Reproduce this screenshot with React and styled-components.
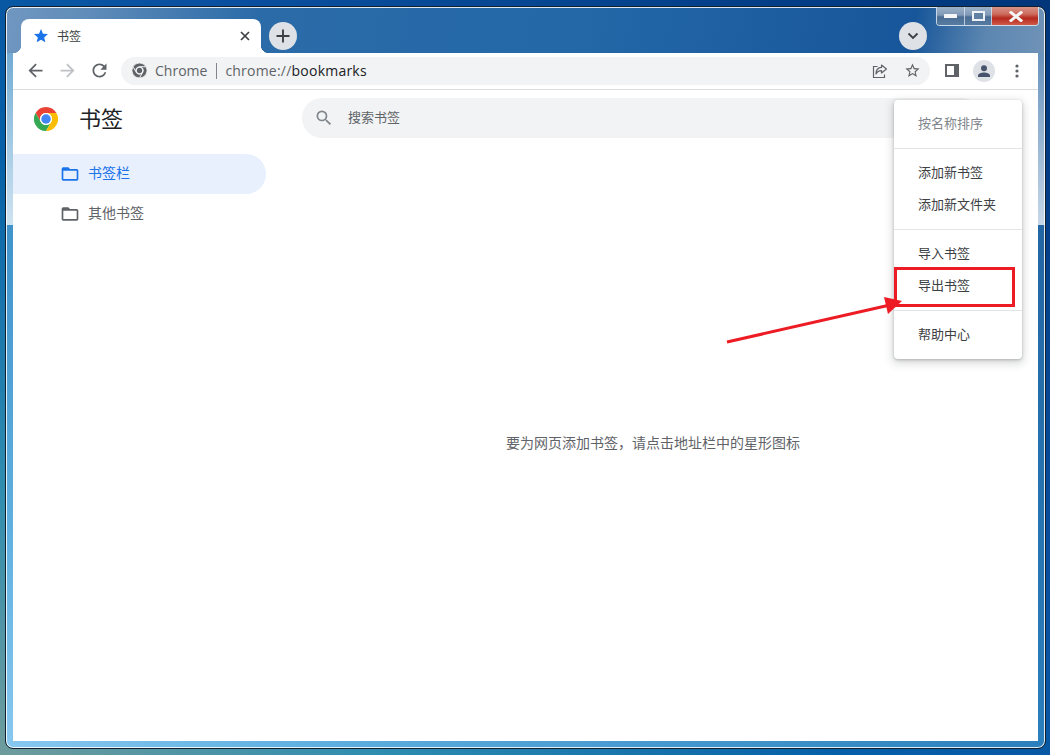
import React from "react";
import styled, { createGlobalStyle } from "styled-components";

const Global = createGlobalStyle`
  html, body { margin: 0; padding: 0; height: 100%; overflow: hidden; }
  #root { height: 100%; }
  * { box-sizing: border-box; }
  body { font-family: "Open Sans", "Noto Sans CJK SC", sans-serif; }
`;

const Desktop = styled.div`
  height: 755px;
  padding: 6px 4px 6px 5px;
  background: linear-gradient(to top right, #6f9c9c 0%, #2f8db0 18%, #0660a8 40%, #0a50a0 60%, #00357a 100%);
`;

const Frame = styled.div`
  position: relative;
  height: 100%;
  display: flex;
  flex-direction: column;
  padding: 12px 7px 7px;
  border: 1px solid #10202e;
  border-radius: 8px;
  box-shadow: inset 0 0 0 1px rgba(255, 255, 255, 0.85);
  background:
    linear-gradient(to bottom, rgba(255, 255, 255, 0.32), rgba(255, 255, 255, 0.74)) 0 46px / 100% 172px no-repeat,
    linear-gradient(100deg, #7097c0 0%, #5f8cb9 8%, #2b6ba8 24%, #2468a8 55%, #17569a 87%, #5c86b0 94%, #7093b8 100%) 0 0 / 100% 46px no-repeat,
    linear-gradient(to top right, #88c8f0 0%, #5fb0e0 15%, #2a7fbc 50%, #1f5b9a 100%);
`;

const WindowControls = styled.div`
  position: absolute;
  top: 0;
  right: 6px;
  width: 103px;
  height: 19px;
  display: flex;
  border: 1px solid rgba(225, 235, 245, 0.85);
  border-top: none;
  border-radius: 0 0 4px 4px;
  overflow: hidden;
`;

const ControlButton = styled.div`
  flex: ${(p) => (p.$close ? "0 0 47px" : p.$wide ? "0 0 27px" : "0 0 28px")};
  display: flex;
  align-items: center;
  justify-content: center;
  border-right: ${(p) => (p.$close ? "none" : "1px solid rgba(225, 235, 245, 0.7)")};
  background: ${(p) =>
    p.$close
      ? "linear-gradient(to bottom, #d89488 0%, #cc6a5c 40%, #b5281c 62%, #d05a48 100%)"
      : "linear-gradient(to bottom, #9db2c9 0%, #8099b6 45%, #4a6c93 55%, #587ca1 100%)"};
`;

const TabStrip = styled.div`
  display: flex;
  align-items: flex-start;
  height: 34px;
  padding-left: 8px;
  flex: none;
`;

const Tab = styled.div`
  position: relative;
  width: 240px;
  height: 34px;
  display: flex;
  align-items: center;
  gap: 9px;
  padding: 0 11px 0 13px;
  background: #fff;
  border-radius: 8px 8px 0 0;
  &::before, &::after {
    content: "";
    position: absolute;
    bottom: 0;
    width: 8px;
    height: 8px;
  }
  &::before { left: -8px; background: radial-gradient(circle at 0 0, transparent 8px, #fff 8.5px); }
  &::after { right: -8px; background: radial-gradient(circle at 100% 0, transparent 8px, #fff 8.5px); }
`;

const TabTitle = styled.span`
  flex: 1;
  margin-bottom: 1px;
  font-size: 12px;
  color: #3c4043;
`;

const RoundButton = styled.div`
  flex: none;
  width: 28px;
  height: 28px;
  margin: 3px ${(p) => (p.$end ? "111px" : "0")} 0 ${(p) => (p.$end ? "auto" : "8px")};
  border-radius: 50%;
  background: #dee1e6;
  display: flex;
  align-items: center;
  justify-content: center;
`;

const Toolbar = styled.div`
  flex: none;
  height: 37px;
  display: flex;
  align-items: center;
  padding: 0 5px 1px 6px;
  background: #fff;
  border-bottom: 1px solid #dadce0;
`;

const ToolButton = styled.div`
  flex: none;
  width: 32px;
  height: 32px;
  display: flex;
  align-items: center;
  justify-content: center;
  margin-left: ${(p) => p.$offset || 0}px;
`;

const Omnibox = styled.div`
  flex: 1;
  height: 28px;
  margin: 0 6px;
  display: flex;
  align-items: center;
  padding: 0 2px 0 11px;
  border-radius: 14px;
  background: #f1f3f4;
  font-size: 14px;
  color: #5f6368;
`;

const Origin = styled.span`
  margin-left: 8px;
  color: #5f6368;
`;

const Divider = styled.span`
  width: 1px;
  height: 16px;
  margin: 0 8px 0 9px;
  background: #80868b;
`;

const Url = styled.span`
  flex: 1;
  letter-spacing: 0.22px;
  color: #5f6368;
  b { font-weight: 400; color: #202124; }
`;

const OmniAction = styled.div`
  flex: none;
  width: 32px;
  display: flex;
  justify-content: center;
`;

const Avatar = styled.div`
  width: 22px;
  height: 22px;
  border-radius: 50%;
  background: #dee1e6;
  display: flex;
  align-items: center;
  justify-content: center;
`;

const Content = styled.div`
  flex: 1;
  min-height: 0;
  display: flex;
  background: #fff;
`;

const Sidebar = styled.nav`
  flex: none;
  width: 253px;
`;

const Brand = styled.div`
  height: 58px;
  margin-bottom: 6px;
  display: flex;
  align-items: center;
  gap: 21px;
  padding-left: 21px;
`;

const BrandTitle = styled.h1`
  margin: 0 0 4px;
  font-size: 22px;
  font-weight: 400;
  color: #202124;
`;

const NavItem = styled.div`
  height: 40px;
  display: flex;
  align-items: center;
  gap: 8px;
  padding-left: 47px;
  border-radius: 0 20px 20px 0;
  font-size: 14px;
  color: ${(p) => (p.$active ? "#1a73e8" : "#5f6368")};
  background: ${(p) => (p.$active ? "#e8f0fe" : "transparent")};
`;

const NavLabel = styled.span`
  margin-bottom: 5px;
`;

const Main = styled.main`
  position: relative;
  flex: 1;
  display: flex;
  flex-direction: column;
`;

const SearchBar = styled.div`
  flex: none;
  width: 680px;
  height: 40px;
  margin: 8px 0 0 36px;
  display: flex;
  align-items: center;
  gap: 14px;
  padding-left: 12px;
  border-radius: 20px;
  background: #f1f3f4;
  font-size: 13px;
  color: #5f6368;
`;

const SearchHint = styled.span`
  margin-bottom: 3px;
`;

const Empty = styled.div`
  flex: 1;
  display: flex;
  align-items: center;
  justify-content: center;
  padding: 4px 0 0 2px;
  font-size: 14px;
  color: #5f6368;
`;

const Menu = styled.div`
  position: absolute;
  top: 10px;
  right: 16px;
  width: 128px;
  padding: 7px 0 9px;
  background: #fff;
  border-radius: 4px;
  box-shadow: 0 1px 3px rgba(60, 64, 67, 0.3), 0 3px 8px 2px rgba(60, 64, 67, 0.18);
`;

const MenuItem = styled.div`
  position: relative;
  height: 32px;
  display: flex;
  align-items: center;
  padding: 0 0 2px 24px;
  font-size: 13px;
  color: ${(p) => (p.$disabled ? "#80868b" : "#3c4043")};
  ${(p) =>
    p.$marked &&
    `&::after {
      content: "";
      position: absolute;
      top: -2px;
      left: 0;
      right: 7px;
      bottom: -6px;
      border: 3px solid #ed1c24;
    }`}
`;

const MenuRule = styled.hr`
  margin: 9px 0 7px;
  border: 0;
  border-top: 1px solid #e3e4e6;
`;

const AnnotationArrow = styled.svg`
  position: absolute;
  left: 454px;
  top: 200px;
  width: 190px;
  height: 60px;
  overflow: visible;
`;

const ChromeLogo = ({ size, mono }) => {
  const cut = mono ? { stroke: "#f1f3f4", strokeWidth: 2.5 } : {};
  return (
    <svg width={size} height={size} viewBox="0 0 48 48">
      <path {...cut} fill={mono ? "#5f6368" : "#ea4335"} d="M24 0A24 24 0 0 0 3.2 12L13.6 30A12 12 0 0 1 24 12H44.8A24 24 0 0 0 24 0Z" />
      <path {...cut} fill={mono ? "#5f6368" : "#34a853"} d="M3.2 12A24 24 0 0 0 24 48L34.4 30A12 12 0 0 1 13.6 30Z" />
      <path {...cut} fill={mono ? "#5f6368" : "#fbbc04"} d="M44.8 12A24 24 0 0 1 24 48L34.4 30A12 12 0 0 0 24 12Z" />
      <circle cx="24" cy="24" r="12" fill={mono ? "#f1f3f4" : "#fff"} />
      <circle cx="24" cy="24" r={mono ? 8.5 : 9.5} fill={mono ? "#5f6368" : "#4285f4"} />
    </svg>
  );
};

const Folder = ({ color }) => (
  <svg width="20" height="20" viewBox="0 0 24 24" fill={color}>
    <path d="M20 6h-8l-2-2H4c-1.1 0-2 .9-2 2v12c0 1.1.9 2 2 2h16c1.1 0 2-.9 2-2V8c0-1.1-.9-2-2-2zm0 12H4V8h16v10z" />
  </svg>
);

export default function App() {
  return (
    <>
      <Global />
      <Desktop>
        <Frame>
          <WindowControls>
            <ControlButton>
              <svg width="13" height="4"><rect width="13" height="4" rx="0.5" fill="#f4f6f8" /></svg>
            </ControlButton>
            <ControlButton $wide>
              <svg width="13" height="10"><rect x="1" y="1" width="11" height="8" fill="#5f7fa3" stroke="#eef2f6" strokeWidth="2" /></svg>
            </ControlButton>
            <ControlButton $close>
              <svg width="14" height="11" viewBox="0 0 14 11">
                <path d="M2 1.5l10 8M12 1.5l-10 8" stroke="#f4f4f4" strokeWidth="3" strokeLinecap="square" fill="none" />
              </svg>
            </ControlButton>
          </WindowControls>

          <TabStrip>
            <Tab>
              <svg width="14" height="14" viewBox="2 2 20 20" fill="#1a73e8">
                <path d="M12 17.27 18.18 21l-1.64-7.03L22 9.24l-7.19-.61L12 2 9.19 8.63 2 9.24l5.46 4.73L5.82 21z" />
              </svg>
              <TabTitle>书签</TabTitle>
              <svg width="10" height="10" viewBox="0 0 10 10">
                <path d="M1 1l8 8M9 1l-8 8" stroke="#3c4043" strokeWidth="1.7" fill="none" />
              </svg>
            </Tab>
            <RoundButton>
              <svg width="14" height="14" viewBox="0 0 14 14">
                <path d="M7 .5v13M.5 7h13" stroke="#3c4043" strokeWidth="1.9" fill="none" />
              </svg>
            </RoundButton>
            <RoundButton $end>
              <svg width="12" height="8" viewBox="0 0 12 8">
                <path d="M1.5 1.5 6 6l4.5-4.5" stroke="#3c4043" strokeWidth="1.8" fill="none" />
              </svg>
            </RoundButton>
          </TabStrip>

          <Toolbar>
            <ToolButton>
              <svg width="21" height="21" viewBox="0 0 24 24" fill="#5f6368">
                <path d="M20 11H7.83l5.59-5.59L12 4l-8 8 8 8 1.41-1.41L7.83 13H20v-2z" />
              </svg>
            </ToolButton>
            <ToolButton>
              <svg width="21" height="21" viewBox="0 0 24 24" fill="#bdc1c6">
                <path d="M12 4l-1.41 1.41L16.17 11H4v2h12.17l-5.58 5.59L12 20l8-8z" />
              </svg>
            </ToolButton>
            <ToolButton>
              <svg width="21" height="21" viewBox="0 0 24 24" fill="#5f6368">
                <path d="M17.65 6.35C16.2 4.9 14.21 4 12 4c-4.42 0-7.99 3.58-7.99 8s3.57 8 7.99 8c3.73 0 6.84-2.55 7.73-6h-2.08c-.82 2.33-3.04 4-5.65 4-3.31 0-6-2.69-6-6s2.69-6 6-6c1.66 0 3.14.69 4.22 1.78L13 11h7V4l-2.35 2.35z" />
              </svg>
            </ToolButton>
            <Omnibox>
              <ChromeLogo size={15} mono />
              <Origin>Chrome</Origin>
              <Divider />
              <Url>chrome://<b>bookmarks</b></Url>
              <OmniAction>
                <svg width="16" height="16" viewBox="0 0 16 16" fill="none" stroke="#5f6368" strokeWidth="1.2">
                  <path d="M5.5 3.5H1.5v11h11v-3" />
                  <path d="M9.5 2l5 4-5 4V7.6C7 7.6 5.2 8.6 4 11c0-4 2-6.4 5.5-6.6z" strokeLinejoin="round" />
                </svg>
              </OmniAction>
              <OmniAction>
                <svg width="17" height="17" viewBox="0 0 24 24" fill="#5f6368">
                  <path d="M22 9.24l-7.19-.62L12 2 9.19 8.63 2 9.24l5.46 4.73L5.82 21 12 17.27 18.18 21l-1.63-7.03L22 9.24zM12 15.4l-3.76 2.27 1-4.28-3.32-2.88 4.38-.38L12 6.1l1.71 4.04 4.38.38-3.32 2.88 1 4.28L12 15.4z" />
                </svg>
              </OmniAction>
            </Omnibox>
            <ToolButton>
              <svg width="14" height="13" viewBox="0 0 14 13">
                <rect x="1" y="1" width="12" height="11" fill="none" stroke="#5f6368" strokeWidth="2" />
                <rect x="9" y="1" width="4" height="11" fill="#5f6368" />
              </svg>
            </ToolButton>
            <ToolButton>
              <Avatar>
                <svg width="14" height="14" viewBox="0 0 14 14" fill="#47536a">
                  <circle cx="7" cy="4.2" r="3" />
                  <path d="M1 13v-1.3C1 9.5 4.5 8.6 7 8.6s6 .9 6 3.1V13z" />
                </svg>
              </Avatar>
            </ToolButton>
            <ToolButton $offset={1}>
              <svg width="4" height="14" viewBox="0 0 4 14" fill="#5f6368">
                <circle cx="2" cy="2" r="1.6" />
                <circle cx="2" cy="7" r="1.6" />
                <circle cx="2" cy="12" r="1.6" />
              </svg>
            </ToolButton>
          </Toolbar>

          <Content>
            <Sidebar>
              <Brand>
                <ChromeLogo size={24} />
                <BrandTitle>书签</BrandTitle>
              </Brand>
              <NavItem $active>
                <Folder color="#1a73e8" />
                <NavLabel>书签栏</NavLabel>
              </NavItem>
              <NavItem>
                <Folder color="#5f6368" />
                <NavLabel>其他书签</NavLabel>
              </NavItem>
            </Sidebar>
            <Main>
              <SearchBar>
                <svg width="20" height="20" viewBox="0 0 24 24" fill="#80868b">
                  <path d="M15.5 14h-.79l-.28-.27A6.471 6.471 0 0 0 16 9.5 6.5 6.5 0 1 0 9.5 16c1.61 0 3.09-.59 4.23-1.57l.27.28v.79l5 4.99L20.49 19l-4.99-5zm-6 0C7.01 14 5 11.99 5 9.5S7.01 5 9.5 5 14 7.01 14 9.5 11.99 14 9.5 14z" />
                </svg>
                <SearchHint>搜索书签</SearchHint>
              </SearchBar>
              <Empty>要为网页添加书签，请点击地址栏中的星形图标</Empty>
              <Menu>
                <MenuItem $disabled>按名称排序</MenuItem>
                <MenuRule />
                <MenuItem>添加新书签</MenuItem>
                <MenuItem>添加新文件夹</MenuItem>
                <MenuRule />
                <MenuItem>导入书签</MenuItem>
                <MenuItem $marked>导出书签</MenuItem>
                <MenuRule />
                <MenuItem>帮助中心</MenuItem>
              </Menu>
              <AnnotationArrow viewBox="0 0 190 60">
                <path d="M7 52 170 15" stroke="#ed1c24" strokeWidth="3" fill="none" />
                <path d="M164 7 182 11 168 24Z" fill="#ed1c24" />
              </AnnotationArrow>
            </Main>
          </Content>
        </Frame>
      </Desktop>
    </>
  );
}
